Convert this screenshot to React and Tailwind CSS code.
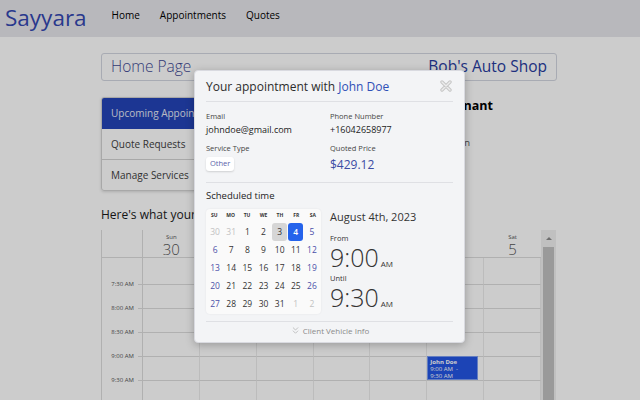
import React from "react";
import { ChevronsDown } from "lucide-react";

const weekDays = [
  ["Sun", 30],
  ["Mon", 31],
  ["Tue", 1],
  ["Wed", 2],
  ["Thu", 3],
  ["Fri", 4],
  ["Sat", 5],
];

const slots = ["7:30 AM", "8:00 AM", "8:30 AM", "9:00 AM", "9:30 AM", "10:00 AM"];

const monthWeeks = [
  [30, 31, 1, 2, 3, 4, 5],
  [6, 7, 8, 9, 10, 11, 12],
  [13, 14, 15, 16, 17, 18, 19],
  [20, 21, 22, 23, 24, 25, 26],
  [27, 28, 29, 30, 31, 1, 2],
];

const dayCell = (w, d, i) => {
  const outside = (w === 0 && d > 20) || (w === 4 && d < 7);
  if (w === 0 && d === 4)
    return "bg-[#2563eb] text-white font-semibold rounded-[3px]";
  if (w === 0 && d === 3) return "bg-[#d6d6d6] text-[#333] rounded-[3px]";
  if (outside) return "text-[#c2c2c2]";
  if (i === 0 || i === 6) return "text-[#4b50a8]";
  return "text-[#333]";
};

function CloseIcon() {
  return (
    <svg width="12" height="12" viewBox="0 0 12 12">
      <path d="M2 2 L10 10 M10 2 L2 10" stroke="#c6c6c6" strokeWidth="3.4" strokeLinecap="round" />
      <path d="M2 2 L10 10 M10 2 L2 10" stroke="#ececec" strokeWidth="1.4" strokeLinecap="round" />
    </svg>
  );
}

function WeekCalendar() {
  return (
    <div className="flex mt-[6px]">
      <div className="w-[440px] border-l border-[#dddddd]">
        {/* header */}
        <div className="flex h-[28px] border-b border-[#dddddd]">
          <div className="w-[41px] border-r border-[#dddddd]" />
          {weekDays.map(([n, d]) => (
            <div key={n} className="w-[57px] flex flex-col items-center text-[#555]">
              <span className="text-[6px] leading-[8px] mt-[3px]">{n}</span>
              <span className="text-[15px] leading-[16px] font-light">{d}</span>
            </div>
          ))}
        </div>
        {/* first partial row */}
        <div className="flex h-[26px]">
          <div className="w-[41px] border-r border-[#dddddd]" />
          {weekDays.map(([n]) => (
            <div key={n} className="w-[57px] border-r border-[#ececec]" />
          ))}
        </div>
        {slots.map((s) => (
          <div key={s} className="flex h-[24px]">
            <div className="w-[41px] border-r border-[#dddddd] flex items-start justify-end">
              <span className="text-[6px] leading-[8px] -mt-[4px] mr-[4px] text-[#555]">{s}</span>
              <span className="w-[4px] h-px bg-[#dddddd]" />
            </div>
            {weekDays.map(([n]) => (
              <div key={n} className="w-[57px] border-t border-t-[#dddddd] border-r border-r-[#ececec]">
                {s === "9:00 AM" && n === "Fri" && (
                  <div className="w-[51px] h-[24px] -mt-px bg-[#2456e4] border border-[#7d9ef0] text-white text-[6px] leading-[7px] px-[2px] pt-[2px] overflow-hidden">
                    <div className="font-bold">John Doe</div>
                    <div>9:00 AM&nbsp; -</div>
                    <div>9:30 AM</div>
                  </div>
                )}
              </div>
            ))}
          </div>
        ))}
      </div>
      <div className="w-[15px] bg-[#f1f1f1] flex flex-col h-[200px]">
        <div className="h-[17px] flex items-center justify-center">
          <span className="w-0 h-0 border-l-[3px] border-r-[3px] border-b-[3px] border-l-transparent border-r-transparent border-b-[#8a8a8a]" />
        </div>
        <div className="flex-1 mx-[2px] bg-[#c1c1c1]" />
      </div>
    </div>
  );
}

function Modal() {
  return (
    <div className="absolute left-[194px] top-[70px] w-[271px] h-[273px] bg-[#f3f4f6] rounded-[4px] border border-[#d9dae0] shadow-[0_2px_8px_rgba(0,0,0,0.25)] px-[11px]">
      <div className="flex items-center justify-between h-[31px] border-b border-[#dfe0e4]">
        <div className="text-[12px] text-[#2d2d2d] pt-[1px]">
          Your appointment with <span className="text-[#2f4fb7]">John Doe</span>
        </div>
        <div className="mr-[1px]">
          <CloseIcon />
        </div>
      </div>

      <div className="grid grid-cols-[124px_1fr] pb-[9px] border-b border-[#dfe0e4]">
        <div>
          <div className="text-[7.5px] leading-[11px] text-[#444] pt-[9px]">Email</div>
          <div className="text-[9px] leading-[13px] text-[#222] mt-[1px]">johndoe@gmail.com</div>
          <div className="text-[7.5px] leading-[11px] text-[#444] mt-[7px]">Service Type</div>
          <div className="mt-[3px] flex w-fit items-center h-[14px] px-[4px] bg-white rounded-[3px] shadow-[0_1px_2px_rgba(0,0,0,0.15)] text-[7.5px] text-[#5a62aa]">
            Other
          </div>
        </div>
        <div>
          <div className="text-[7.5px] leading-[11px] text-[#444] pt-[9px]">Phone Number</div>
          <div className="text-[9px] leading-[13px] text-[#222] mt-[1px]">+16042658977</div>
          <div className="text-[7.5px] leading-[11px] text-[#444] mt-[7px]">Quoted Price</div>
          <div className="text-[12px] leading-[17px] text-[#3a4ba3] mt-[2px]">$429.12</div>
        </div>
      </div>

      <div className="text-[9.5px] leading-[14px] text-[#222] pt-[6px]">Scheduled time</div>
      <div className="flex mt-[6px] pb-[7px] border-b border-[#dfe0e4]">
        <div className="w-[115px] h-[105px] bg-[#fafafa] rounded-[4px] shadow-[0_0_2px_rgba(0,0,0,0.08)]">
          <div className="grid grid-cols-7 h-[14px] items-center text-center text-[5px] font-bold text-[#333]">
            {["SU", "MO", "TU", "WE", "TH", "FR", "SA"].map((d) => (
              <span key={d}>{d}</span>
            ))}
          </div>
          {monthWeeks.map((wk, w) => (
            <div key={w} className="grid grid-cols-7 h-[18px] px-[1px]">
              {wk.map((d, i) => (
                <div
                  key={i}
                  className={`flex items-center justify-center text-[8.5px] mx-[0.5px] ${dayCell(w, d, i)}`}
                >
                  {d}
                </div>
              ))}
            </div>
          ))}
        </div>
        <div className="ml-[9px] text-[#333]">
          <div className="text-[11px] leading-[16px]">August 4th, 2023</div>
          <div className="text-[7.5px] leading-[11px] mt-[8px]">From</div>
          <div className="flex items-baseline -mt-[1px]">
            <span className="text-[25px] leading-[28px] font-light">9:00</span>
            <span className="text-[8px] ml-[2px]">AM</span>
          </div>
          <div className="text-[7.5px] leading-[11px] mt-[2px]">Until</div>
          <div className="flex items-baseline -mt-[1px]">
            <span className="text-[25px] leading-[28px] font-light">9:30</span>
            <span className="text-[8px] ml-[2px]">AM</span>
          </div>
        </div>
      </div>
      <div className="h-[17px] flex items-center justify-center gap-[2px] text-[8px] text-[#8a8a8a]">
        <ChevronsDown size={11} strokeWidth={1.5} className="text-[#aaaaaa]" />
        Client Vehicle Info
      </div>
    </div>
  );
}

export default function App() {
  return (
    <div className="relative w-[640px] h-[400px] overflow-hidden bg-white font-['Open_Sans',sans-serif]">
      <nav className="h-[37px] bg-[#e7e7eb] flex items-center">
        <div className="ml-[5px] text-[22.5px] leading-[30px] text-[#3448b1] -mt-[2px]">Sayyara</div>
        <div className="flex gap-[20px] ml-[25px] -mt-[6px] text-[10px] text-black">
          <span>Home</span>
          <span>Appointments</span>
          <span>Quotes</span>
        </div>
      </nav>

      <main className="ml-[101px] w-[456px] pt-[16px]">
        <div className="h-[28px] border border-[#d3d6e0] rounded-[3px] flex items-center justify-between px-[9px]">
          <span className="text-[15.5px] font-light text-[#3f4a94]">Home Page</span>
          <span className="text-[15.5px] text-[#273b9e]">Bob's Auto Shop</span>
        </div>

        <div className="flex mt-[16px]">
          <div className="w-[107px] rounded-[3px] border border-[#d2d2d2] overflow-hidden shadow-[0_1px_3px_rgba(0,0,0,0.15)] text-[10px]">
            <div className="h-[31px] bg-[#2344b8] text-[#e6e9f5] flex items-center px-[9px] whitespace-nowrap">
              Upcoming Appointments
            </div>
            <div className="h-[31px] text-[#404040] flex items-center px-[9px] border-b border-[#d2d2d2]">
              Quote Requests
            </div>
            <div className="h-[30px] text-[#404040] flex items-center px-[9px]">Manage Services</div>
          </div>
          <div className="flex-1">
            <div className="text-right pr-[64px] text-[12.5px] leading-[18px] font-bold text-black">
              Welcome back, Tenant
            </div>
            <div className="text-right pr-[87px] text-[9.5px] leading-[14px] text-[#555] mt-[21px]">
              Role: Shop Admin
            </div>
          </div>
        </div>

        <div className="mt-[15px] text-[12px] leading-[18px] text-[#1a1a1a]">
          Here's what your week looks like:
        </div>

        <WeekCalendar />
      </main>

      <div className="absolute inset-0 bg-black/20" />
      <Modal />
    </div>
  );
}
